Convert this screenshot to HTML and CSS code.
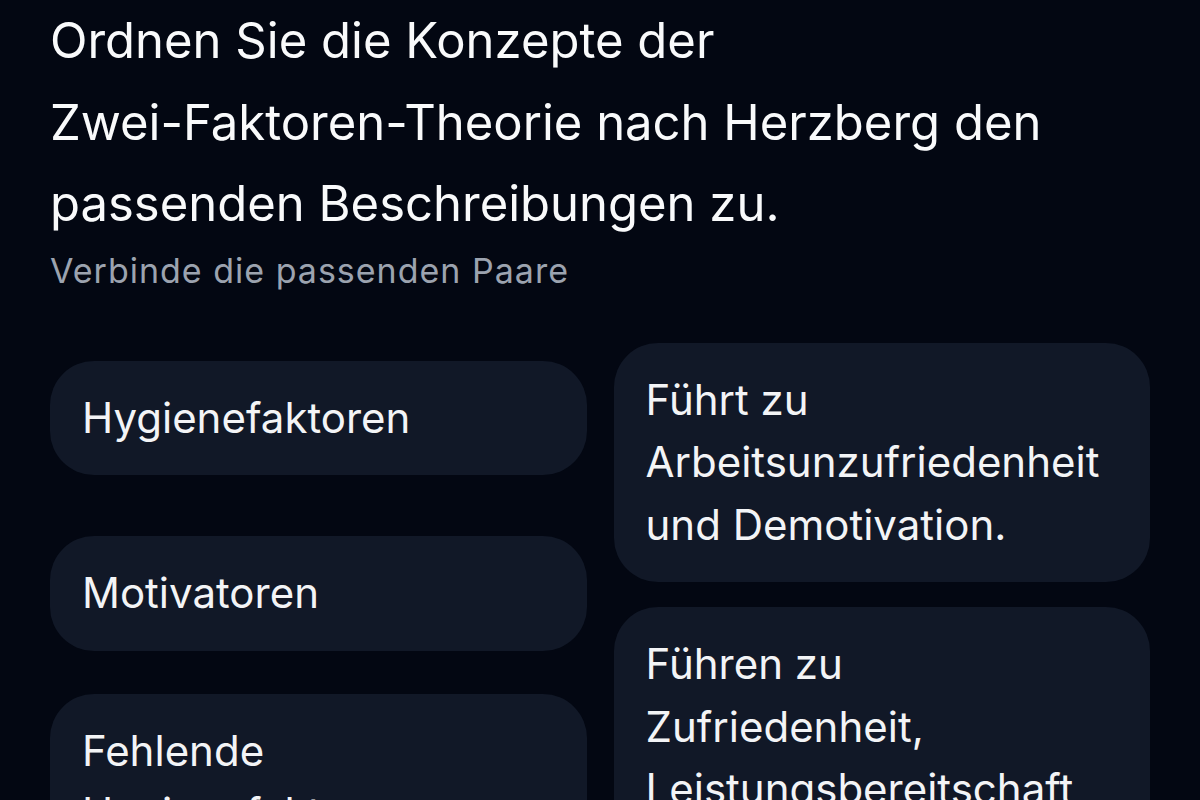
FILE: index.html
```html
<!DOCTYPE html>
<html lang="de">
<head>
<meta charset="utf-8">
<link rel="stylesheet" href="styles.css">
</head>
<body>
<main class="screen">
  <h1 class="question">Ordnen Sie die Konzepte der <span class="nowrap">Zwei-Faktoren-Theorie</span> nach Herzberg den passenden Beschreibungen zu.</h1>
  <p class="hint">Verbinde die passenden Paare</p>
  <div class="pairs">
    <div class="col col-left">
      <div class="card">Hygienefaktoren</div>
      <div class="card">Motivatoren</div>
      <div class="card">Fehlende Hygienefaktoren</div>
    </div>
    <div class="col col-right">
      <div class="card">Führt zu Arbeitsunzufriedenheit und Demotivation.</div>
      <div class="card">Führen zu Zufriedenheit, Leistungsbereitschaft und Motivation.</div>
    </div>
  </div>
</main>
</body>
</html>
```
FILE: styles.css
```css
html, body {
  margin: 0;
  padding: 0;
  background: #030712;
}
body {
  font-family: Inter, "Noto Sans", sans-serif;
  color: #f3f4f6;
  height: 800px;
  overflow: hidden;
}
.screen {
  padding: 0 50px;
}
.question {
  margin: 0;
  font-size: 49px;
  line-height: 81.5px;
  font-weight: 400;
  color: #f9fafb;
}
.nowrap {
  white-space: nowrap;
}
.hint {
  margin: 6px 0 0;
  font-size: 34px;
  line-height: 40px;
  letter-spacing: 1px;
  color: #9ca3af;
}
.pairs {
  margin-top: 52px;
  display: grid;
  grid-template-columns: 1fr 1fr;
  column-gap: 27px;
  align-items: start;
}
.col {
  display: flex;
  flex-direction: column;
}
.col-left {
  padding-top: 18px;
}
.col-left .card:nth-child(2) {
  margin-top: 61px;
}
.col-left .card:nth-child(3) {
  margin-top: 43px;
}
.col-right {
  gap: 25px;
}
.card {
  background: #111827;
  border-radius: 44px;
  padding: 26px 32px;
  font-size: 42px;
  line-height: 62.5px;
  color: #f3f4f6;
}
```
